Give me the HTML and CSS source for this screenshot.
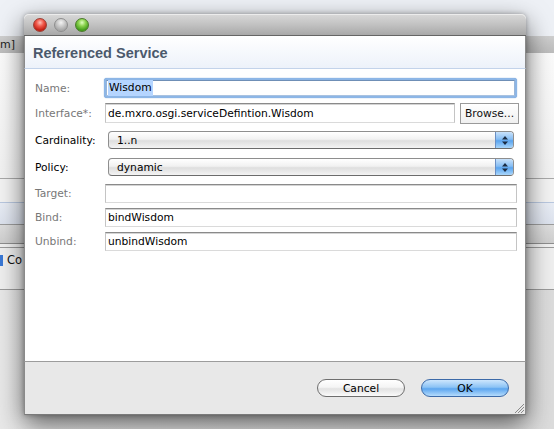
FILE: index.html
```html
<!DOCTYPE html>
<html>
<head>
<meta charset="utf-8">
<link rel="stylesheet" href="styles.css">
</head>
<body>
<div class="desktop">
  <div class="bg-top"></div>
  <div class="bg-bar"><span class="bg-bar-text">m]</span></div>
  <div class="bg-panel"></div>
  <div class="bg-row bg-row-a"></div>
  <div class="bg-row bg-row-b"></div>
  <div class="bg-row bg-row-c"></div>
  <div class="bg-row bg-row-d"><span class="bg-check"></span><span class="bg-co">Co</span></div>
  <div class="bg-rest"></div>

  <div class="dialog">
    <div class="titlebar">
      <span class="light light-red"></span>
      <span class="light light-gray"></span>
      <span class="light light-green"></span>
    </div>
    <div class="header"><span class="title">Referenced Service</span></div>
    <div class="form">
      <div class="row row-name">
        <span class="label muted">Name:</span>
        <div class="focus-ring"><div class="field field-focus"><span class="sel">Wisdom</span></div></div>
      </div>
      <div class="row row-iface">
        <span class="label muted">Interface*:</span>
        <div class="field field-iface">de.mxro.osgi.serviceDefintion.Wisdom</div>
        <div class="browse">Browse...</div>
      </div>
      <div class="row row-card">
        <span class="label">Cardinality:</span>
        <div class="popup"><span class="popup-text">1..n</span><span class="popup-arrows"><svg width="8" height="11" viewBox="0 0 8 11"><path d="M4 1 L7 4.5 L1 4.5 Z M4 10 L7 6.5 L1 6.5 Z" fill="#1b2c44"/></svg></span></div>
      </div>
      <div class="row row-policy">
        <span class="label">Policy:</span>
        <div class="popup"><span class="popup-text">dynamic</span><span class="popup-arrows"><svg width="8" height="11" viewBox="0 0 8 11"><path d="M4 1 L7 4.5 L1 4.5 Z M4 10 L7 6.5 L1 6.5 Z" fill="#1b2c44"/></svg></span></div>
      </div>
      <div class="row row-target">
        <span class="label muted">Target:</span>
        <div class="field"></div>
      </div>
      <div class="row row-bind">
        <span class="label muted">Bind:</span>
        <div class="field">bindWisdom</div>
      </div>
      <div class="row row-unbind">
        <span class="label muted">Unbind:</span>
        <div class="field">unbindWisdom</div>
      </div>
    </div>
    <div class="footer">
      <div class="btn btn-cancel">Cancel</div>
      <div class="btn btn-ok">OK</div>
      <svg class="grip" width="10" height="10" viewBox="0 0 10 10"><path d="M10 1 L1 10 M10 4 L4 10 M10 7 L7 10" stroke="#8a8a8a" stroke-width="1"/></svg>
    </div>
  </div>
</div>
</body>
</html>
```
FILE: styles.css
```css
html, body {
  margin: 0;
  padding: 0;
}
body {
  width: 554px;
  height: 429px;
  overflow: hidden;
  font-family: "DejaVu Sans", "Liberation Sans", sans-serif;
  font-size: 10.7px;
  color: #000;
}
.desktop {
  position: relative;
  width: 554px;
  height: 429px;
  overflow: hidden;
  background: #e6e6e6;
}
.bg-top {
  height: 36px;
  background: #eef1f6;
}
.bg-bar {
  height: 17px;
  background: linear-gradient(#cfcfcf, #bcbcbc);
  display: flex;
  align-items: center;
}
.bg-bar-text {
  font-size: 11px;
  color: #222;
  margin-left: 0;
}
.bg-panel {
  height: 125px;
  background: linear-gradient(#fbfbfb, #f2f2f2);
  border-bottom: 1px solid #a9a9a9;
}
.bg-row-a {
  height: 23px;
  background: #f3f3f3;
  border-bottom: 1px solid #b9c8e0;
}
.bg-row-b {
  height: 21px;
  background: linear-gradient(#e9edf5, #dde3ee);
  border-bottom: 1px solid #9c9c9c;
}
.bg-row-c {
  height: 18px;
  background: linear-gradient(#dedede, #cfcfcf);
  border-bottom: 1px solid #8e8e8e;
  box-shadow: 0 3px 0 #f1f1f1, 0 4px 0 #9a9a9a;
}
.bg-row-d {
  margin-top: 4px;
  height: 42px;
  background: #efefef;
  border-bottom: 1px solid #9a9a9a;
  display: flex;
  align-items: flex-start;
  padding-top: 5px;
  box-sizing: border-box;
}
.bg-check {
  width: 3px;
  height: 11px;
  margin-top: 2px;
  background: #3a78d6;
}
.bg-co {
  margin-left: 4px;
  font-size: 11.5px;
  color: #111;
}
.bg-rest {
  height: 140px;
  background: linear-gradient(90deg, #e8e8e8, #dcdcdc);
}

/* dialog window */
.dialog {
  position: absolute;
  left: 24px;
  top: 14px;
  width: 502px;
  display: flex;
  flex-direction: column;
  border-radius: 5px 5px 0 0;
  box-shadow: 0 9px 26px rgba(0, 0, 0, 0.6), 0 0 5px rgba(0, 0, 0, 0.3);
}
.titlebar {
  height: 21px;
  border-bottom: 1px solid #656565;
  border-radius: 5px 5px 0 0;
  background: linear-gradient(#d9d9d9, #c2c2c2 50%, #a8a8a8);
  display: flex;
  align-items: center;
  padding-left: 9px;
  gap: 7px;
  box-shadow: inset 0 1px 0 #ececec;
}
.light {
  width: 14px;
  height: 14px;
  border-radius: 50%;
  box-sizing: border-box;
  margin-top: 1px;
}
.light-red {
  background: radial-gradient(circle at 50% 30%, #ffc0b8 0, #f05a4c 35%, #c01c10 75%, #ea6a5a 100%);
  border: 1px solid #9a4036;
}
.light-gray {
  background: radial-gradient(circle at 50% 30%, #f4f4f4 0, #c8c8c8 40%, #a6a6a6 75%, #cfcfcf 100%);
  border: 1px solid #8e8e8e;
}
.light-green {
  background: radial-gradient(circle at 50% 30%, #e0ffc0 0, #8ad24e 35%, #3f9a18 75%, #8ed65a 100%);
  border: 1px solid #4c7a2c;
}
.header {
  height: 32px;
  background: linear-gradient(#ffffff, #edf2fa);
  border-bottom: 1px solid #c3d3ea;
  border-left: 1px solid #8a8a8a;
  border-right: 1px solid #8a8a8a;
  display: flex;
  align-items: center;
  padding-left: 8px;
}
.title {
  font-family: "Liberation Sans", Arial, sans-serif;
  font-weight: bold;
  font-size: 14.5px;
  color: #4b596c;
  margin-top: 1px;
}
.form {
  height: 292px;
  box-sizing: border-box;
  background: #fff;
  border-left: 1px solid #8a8a8a;
  border-right: 1px solid #8a8a8a;
  padding: 9px 8px 0 10px;
  display: flex;
  flex-direction: column;
}
.row {
  display: flex;
  align-items: center;
}
.label {
  width: 70px;
  flex: none;
  color: #000;
}
.label.muted {
  color: #777;
}
.row-name { height: 20px; }
.row-iface { height: 21px; margin-top: 5px; }
.row-card { height: 18px; margin-top: 7px; }
.row-policy { height: 18px; margin-top: 9px; }
.row-target { height: 19px; margin-top: 8px; }
.row-bind { height: 19px; margin-top: 5px; }
.row-unbind { height: 19px; margin-top: 5px; }

.field {
  flex: 1;
  height: 100%;
  box-sizing: border-box;
  border: 1px solid;
  border-color: #8a8a8a #c4c4c4 #dadada #c4c4c4;
  box-shadow: inset 0 1px 0 #d4d4d4;
  background: #fff;
  padding-left: 2px;
  display: flex;
  align-items: center;
  white-space: nowrap;
}
.row-iface .field {
  flex: none;
  width: 350px;
  height: 20px;
  align-self: flex-start;
}
.focus-ring {
  flex: 1;
  height: 100%;
  box-sizing: border-box;
  border-radius: 3px;
  padding: 2px;
  background: #8db6e6;
  box-shadow: 0 0 1px #4e86c8;
  margin-left: -1px;
}
.field-focus {
  border-color: #6f8fb6 #9ab6d8 #a9c2e0 #9ab6d8;
  box-shadow: none;
  padding-left: 1px;
}
.sel {
  background: #b5d5ff;
  padding: 1px 1px;
  line-height: 14px;
}
.browse {
  flex: none;
  margin-left: 5px;
  width: 59px;
  height: 21px;
  box-sizing: border-box;
  border: 1px solid #9a9a9a;
  background: linear-gradient(#ffffff, #f0f0f0);
  display: flex;
  align-items: center;
  justify-content: center;
  color: #111;
}
.popup {
  flex: 1;
  margin-left: 3px;
  margin-right: 3px;
  height: 18px;
  box-sizing: border-box;
  border: 1px solid #8e8e8e;
  border-bottom-color: #6c6c6c;
  border-radius: 4px;
  background: linear-gradient(#ffffff, #f1f1f1 45%, #dedede 55%, #f4f4f4);
  display: flex;
  align-items: center;
  overflow: hidden;
}
.popup-text {
  flex: 1;
  padding-left: 8px;
}
.popup-arrows {
  width: 17px;
  height: 100%;
  border-left: 1px solid #6a8fc4;
  background: linear-gradient(#c9e2fb, #86bdf3 45%, #5aa4ef 55%, #a9d6fb);
  display: flex;
  align-items: center;
  justify-content: center;
}
.footer {
  height: 54px;
  border-top: 1px solid #9c9c9c;
  border-left: 1px solid #8a8a8a;
  border-right: 1px solid #8a8a8a;
  border-bottom: 1px solid #7a7a7a;
  background: #e8e8e8;
  display: flex;
  justify-content: flex-end;
  align-items: flex-start;
  padding-top: 17px;
  padding-right: 16px;
  box-sizing: border-box;
  gap: 16px;
  position: relative;
}
.btn {
  width: 88px;
  height: 18px;
  box-sizing: border-box;
  border-radius: 9px;
  display: flex;
  align-items: center;
  justify-content: center;
  color: #000;
}
.btn-cancel {
  border: 1px solid #6e6e6e;
  background: linear-gradient(#ffffff, #f5f5f5 45%, #e2e2e2 55%, #fbfbfb);
}
.btn-ok {
  border: 1px solid #3c6aa8;
  background: linear-gradient(#cde6fd, #8cc3f5 45%, #5da6ef 55%, #b5dcfc);
}
.grip {
  position: absolute;
  right: 1px;
  bottom: 1px;
}
```
